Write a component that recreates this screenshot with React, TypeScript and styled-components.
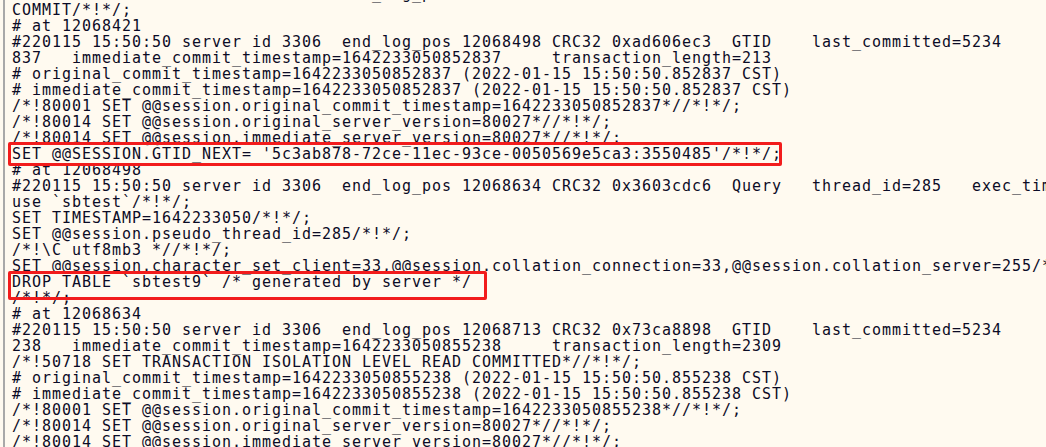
import React from "react";
import styled, { createGlobalStyle } from "styled-components";

const GlobalStyle = createGlobalStyle`
  html, body {
    margin: 0;
    padding: 0;
    background: #fffaf0;
  }
  #root {
    width: 1046px;
    height: 447px;
    overflow: hidden;
  }
`;

const Window = styled.div`
  display: flex;
  width: 1046px;
  height: 447px;
  background: #fffaf0;
  overflow: hidden;
`;

const Gutter = styled.div`
  width: 3px;
  flex: none;
  background: #fffaf0;
`;

const Editor = styled.div`
  position: relative;
  flex: 1;
  display: flex;
  flex-direction: column;
  border-left: 2px solid #a9a9a9;
  padding-left: 7px;
  overflow: hidden;
`;

const Lines = styled.div`
  display: flex;
  flex-direction: column;
  margin-top: -14.5px;
`;

const Line = styled.div`
  height: 16px;
  line-height: 16px;
  white-space: pre;
  font-family: "DejaVu Sans Mono", "Liberation Mono", monospace;
  font-size: 15px;
  letter-spacing: 0.97px;
  color: #0b0b26;
`;

const Mark = styled.div<{ $left: number; $top: number; $w: number; $h: number }>`
  position: absolute;
  left: ${(p) => p.$left}px;
  top: ${(p) => p.$top}px;
  width: ${(p) => p.$w}px;
  height: ${(p) => p.$h}px;
  box-sizing: border-box;
  border: 3px solid #f21c1c;
  border-radius: 2px;
  pointer-events: none;
`;

const lines: string[] = [
  "#220115 15:50:50 server id 3306  end_log_pos 12068421 CRC32 0x4c1e3a7d     Xid = 215380",
  "COMMIT/*!*/;",
  "# at 12068421",
  "#220115 15:50:50 server id 3306  end_log_pos 12068498 CRC32 0xad606ec3  GTID    last_committed=5234",
  "837   immediate_commit_timestamp=1642233050852837     transaction_length=213",
  "# original_commit_timestamp=1642233050852837 (2022-01-15 15:50:50.852837 CST)",
  "# immediate_commit_timestamp=1642233050852837 (2022-01-15 15:50:50.852837 CST)",
  "/*!80001 SET @@session.original_commit_timestamp=1642233050852837*//*!*/;",
  "/*!80014 SET @@session.original_server_version=80027*//*!*/;",
  "/*!80014 SET @@session.immediate_server_version=80027*//*!*/;",
  "SET @@SESSION.GTID_NEXT= '5c3ab878-72ce-11ec-93ce-0050569e5ca3:3550485'/*!*/;",
  "# at 12068498",
  "#220115 15:50:50 server id 3306  end_log_pos 12068634 CRC32 0x3603cdc6  Query   thread_id=285   exec_time=0     error_code=0",
  "use `sbtest`/*!*/;",
  "SET TIMESTAMP=1642233050/*!*/;",
  "SET @@session.pseudo_thread_id=285/*!*/;",
  "/*!\\C utf8mb3 *//*!*/;",
  "SET @@session.character_set_client=33,@@session.collation_connection=33,@@session.collation_server=255/*!*/;",
  "DROP TABLE `sbtest9` /* generated by server */",
  "/*!*/;",
  "# at 12068634",
  "#220115 15:50:50 server id 3306  end_log_pos 12068713 CRC32 0x73ca8898  GTID    last_committed=5234",
  "238   immediate_commit_timestamp=1642233050855238     transaction_length=2309",
  "/*!50718 SET TRANSACTION ISOLATION LEVEL READ COMMITTED*//*!*/;",
  "# original_commit_timestamp=1642233050855238 (2022-01-15 15:50:50.855238 CST)",
  "# immediate_commit_timestamp=1642233050855238 (2022-01-15 15:50:50.855238 CST)",
  "/*!80001 SET @@session.original_commit_timestamp=1642233050855238*//*!*/;",
  "/*!80014 SET @@session.original_server_version=80027*//*!*/;",
  "/*!80014 SET @@session.immediate_server_version=80027*//*!*/;",
];

export default function App() {
  return (
    <>
      <GlobalStyle />
      <Window>
        <Gutter />
        <Editor>
          <Lines>
            {lines.map((l, i) => (
              <Line key={i}>{l}</Line>
            ))}
          </Lines>
          <Mark $left={3} $top={142} $w={774} $h={24} />
          <Mark $left={3} $top={271} $w={479} $h={29} />
        </Editor>
      </Window>
    </>
  );
}
